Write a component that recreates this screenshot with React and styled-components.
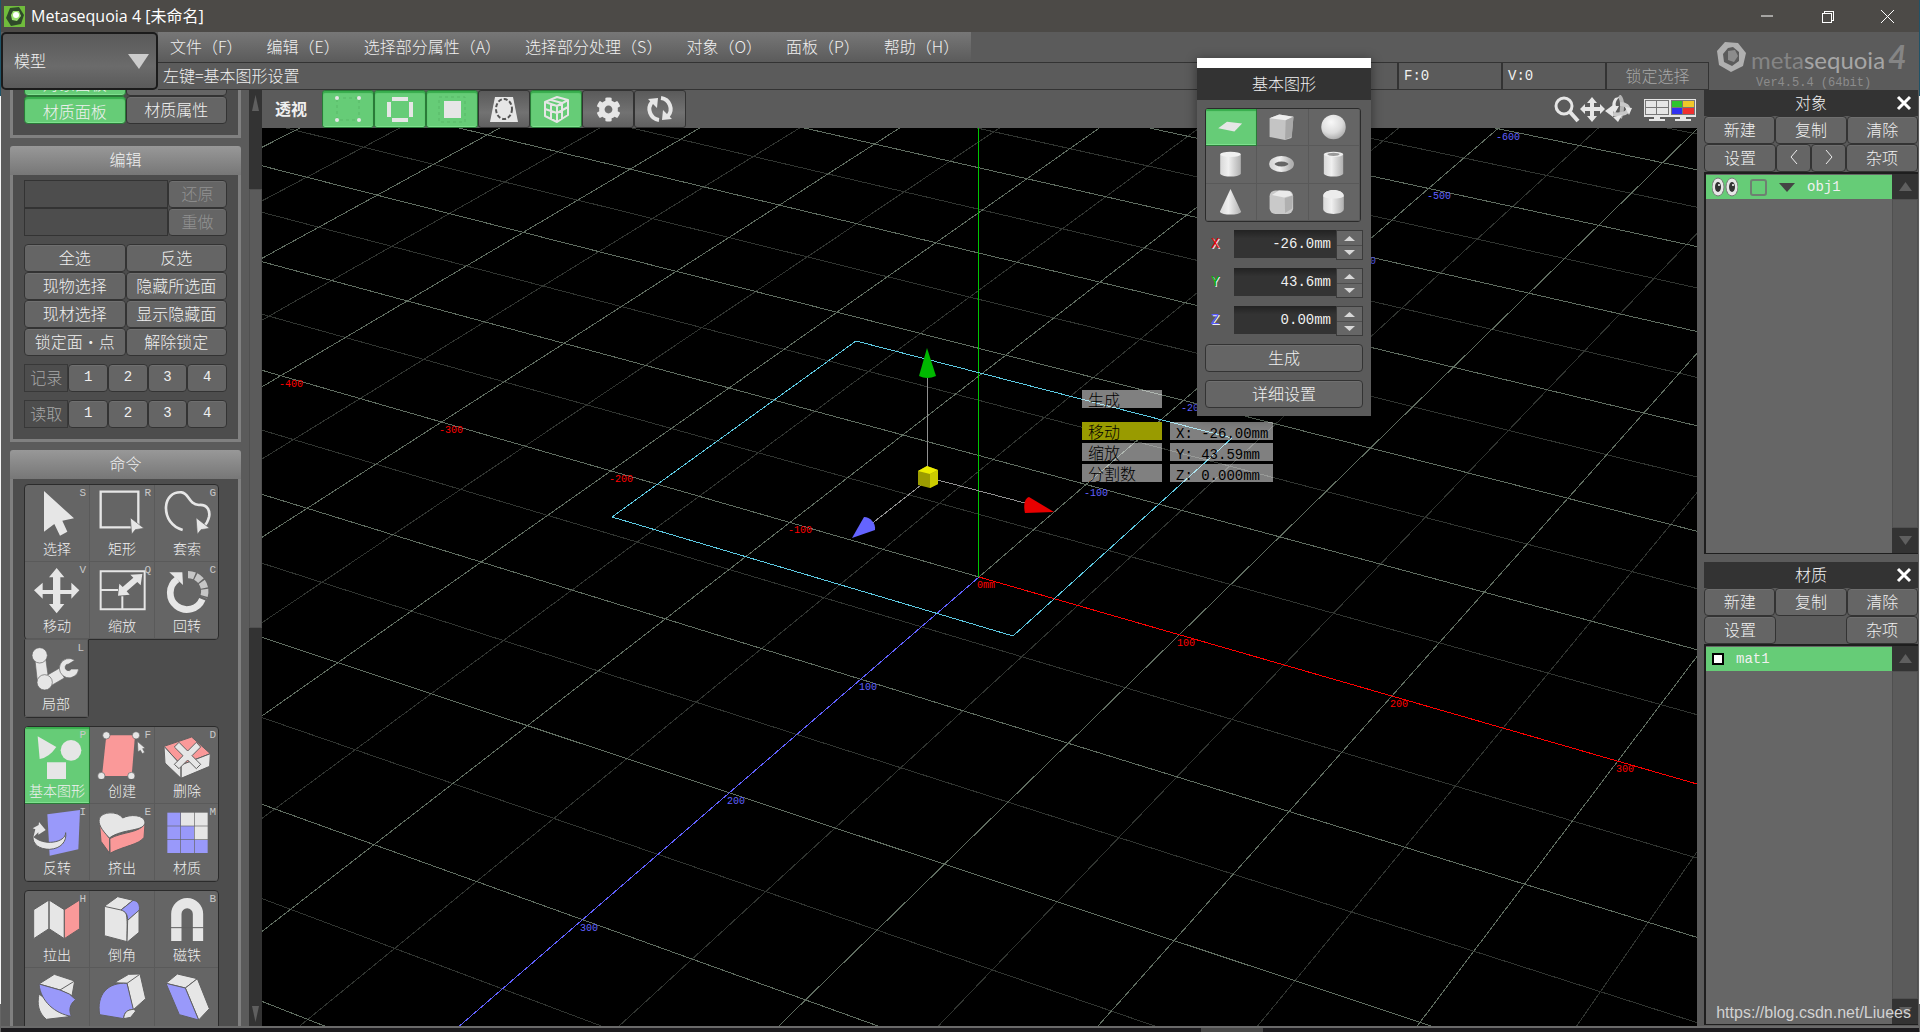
import { useState } from "react";
import styled, { createGlobalStyle, css } from "styled-components";
import { FaCog } from "react-icons/fa";

const cjk = `"Noto Sans CJK SC", sans-serif`;
const mono = `"Liberation Mono", "Noto Sans CJK SC", monospace`;

const GlobalStyle = createGlobalStyle`
  *, *::before, *::after { box-sizing: border-box; }
  body { margin: 0; background: #5b5b5b; }
  button, input, select { font: inherit; color: inherit; margin: 0; padding: 0; border: 0; background: none; border-radius: 0; }
  svg { display: block; }
`;

const Page = styled.div`
  position: relative;
  display: flex;
  flex-direction: column;
  height: 100vh;
  overflow: hidden;
  padding: 0 1px;
  font: 300 16px/24px ${cjk};
  color: #f0f0f0;
  background: linear-gradient(#1f5468 96px, #f4f4f4 96px, #f4f4f4 1004px, #666 1004px);
`;

/* title bar */

const TitleBar = styled.header`
  display: flex;
  flex: none;
  align-items: center;
  height: 32px;
  padding: 0 2px 0 3px;
  background: #4c4a47;
`;

const AppTitle = styled.h1`
  flex: 1;
  margin: 0 0 0 6px;
  font: 400 16px/24px "Open Sans", ${cjk};
  color: #fff;
`;

const WindowButton = styled.button`
  display: grid;
  place-items: center;
  width: 60px;
  height: 30px;
`;

/* header rows */

const Header = styled.div`
  display: grid;
  grid-template-columns: 157px 1fr 210px;
  flex: none;
  background: #5b5b5b;
`;

const ModeBox = styled.label`
  position: relative;
  display: flex;
  align-items: center;
  border: 2px solid #1b1b1b;
  border-radius: 5px;
  background: linear-gradient(#5a5a5a, #6b6b6b 60%, #5a5a5a);
`;

const ModeSelect = styled.select`
  appearance: none;
  width: 100%;
  height: 100%;
  padding: 0 0 2px 11px;
`;

const ModeArrow = styled.svg`
  position: absolute;
  right: 7px;
  pointer-events: none;
`;

const Bars = styled.div`
  display: flex;
  flex-direction: column;
`;

const MenuBar = styled.nav`
  display: flex;
  align-self: flex-start;
  height: 30px;
  background: linear-gradient(#777, #5b5b5b);
`;

const MenuItem = styled.button`
  padding: 0 12px 2px;
  white-space: nowrap;
`;

const StatusBar = styled.div`
  display: flex;
  height: 28px;
  border: solid #333;
  border-width: 1px 0;
  line-height: 24px;
`;

const StatusText = styled.div`
  flex: 1;
  padding-left: 5px;
`;

const StatusCell = styled.div`
  width: 104px;
  padding-left: 5px;
  border-left: 2px solid #333;
  font: 14px/26px ${mono};
`;

const LockButton = styled.button`
  width: 104px;
  padding-bottom: 2px;
  border: solid #333;
  border-width: 0 1px 0 2px;
  color: #a8a8a8;
`;

const Brand = styled.div`
  display: grid;
  grid-template-columns: 32px 1fr;
  column-gap: 3px;
  align-content: end;
  padding-left: 7px;
  color: #a6a6a6;
`;

const BrandName = styled.div`
  font: 400 24px/32px "Liberation Sans Narrow", Lato, sans-serif;
  white-space: nowrap;

  span { color: #858585; }
  em { margin-left: 3px; color: #858585; font-size: 32px; font-weight: 700; }
`;

const Version = styled.div`
  grid-column: 1 / -1;
  padding-left: 40px;
  font: 12px/14px ${mono};
  color: #8c8c8c;
`;

/* shared parts */

const Workspace = styled.main`
  display: flex;
  flex: 1;
  min-height: 0;
  background: #5b5b5b;
`;

const pressed = css`
  background: #66cc77;
  border-color: #2a7a38;
  box-shadow: inset 0 2px 1px #37ac4c, inset 0 -1px 0 #7ee08e;
`;

const Button = styled.button`
  flex: ${(p) => p.$grow ?? 1} 1 0;
  min-width: 0;
  height: 28px;
  padding: ${(p) => (p.$active ? "2px 0 0" : "0 0 2px")};
  border: 1px solid #333;
  border-radius: 4px;
  background: #656565;
  box-shadow: inset 0 1px 0 #6f6f6f;
  line-height: 22px;
  white-space: nowrap;
  ${(p) => p.$mono && `font-family: ${mono}; font-size: 14px;`}
  ${(p) => p.$active && pressed}

  &:disabled { color: #929292; }
`;

const Row = styled.div`
  display: flex;
`;

/* left panel */

const Sidebar = styled.aside`
  flex: none;
  width: 248px;
  padding: 0 8px 0 9px;
  overflow: hidden;
`;

const Group = styled.section`
  margin-bottom: 8px;
`;

const FirstGroup = styled(Group)`
  margin-top: -27px;
`;

const GroupTitle = styled.h2`
  height: 29px;
  margin: 0;
  border-radius: 3px 3px 0 0;
  background: linear-gradient(#989898, #777);
  font: inherit;
  line-height: 26px;
  text-align: center;
`;

const GroupBody = styled.div`
  display: flex;
  flex-direction: column;
  gap: 8px;
  padding: 5px 11px 11px;
  border: 3px solid #808080;
  border-top: 0;
  background: #4d4d4d;
`;

const History = styled.input`
  flex: 145 1 0;
  min-width: 0;
  height: 28px;
  border: 1px solid #333;
`;

const SlotLabel = styled.span`
  flex: 45 1 0;
  border: 1px solid #383838;
  color: #a8a8a8;
  text-align: center;
  line-height: 24px;
`;

const Tools = styled.div`
  display: grid;
  grid-template-columns: repeat(3, 1fr);
  width: 195px;
  border: 1px solid #2b2b2b;
  border-radius: 4px;
  background: #656565;
  overflow: hidden;
`;

const LooseTool = styled.div`
  width: 65px;
  margin-top: -9px;
  border: 1px solid #2b2b2b;
  border-top-color: #5b5b5b;
  border-radius: 0 0 4px 4px;
  background: #656565;
`;

const Tool = styled.button`
  position: relative;
  display: flex;
  flex-direction: column;
  align-items: center;
  width: 100%;
  height: 77px;
  border: solid #5a5a5a;
  border-width: 0 1px 1px 0;
  font-size: 14px;
  line-height: 22px;
  white-space: nowrap;
  ${(p) => p.$active && pressed}

  svg { flex: none; width: 64px; height: 52px; }
`;

const Key = styled.kbd`
  position: absolute;
  top: 1px;
  right: 3px;
  font: 11px/14px ${mono};
  color: #c8c8c8;
`;

const Scrollbar = styled.div`
  display: flex;
  flex: none;
  flex-direction: column;
  width: ${(p) => p.$width}px;
  background: #333;
`;

const ScrollButton = styled.button`
  display: grid;
  place-items: center;
  height: 25px;
`;

const Track = styled.div`
  display: flex;
  flex: 1;
  flex-direction: column;
`;

const Thumb = styled.div`
  flex: ${(p) => p.$size};
  background: #5b5b5b;
  border: 1px solid #505050;
`;

const Rest = styled.div`
  flex: ${(p) => p.$size};
`;

/* 3d view */

const View = styled.section`
  display: flex;
  flex: 1;
  flex-direction: column;
  min-width: 0;
`;

const ViewBar = styled.div`
  display: flex;
  flex: none;
  align-items: center;
  height: 38px;
`;

const ViewName = styled.div`
  width: 60px;
  padding: 0 0 2px 13px;
  font-weight: 700;
`;

const ViewButton = styled.button`
  width: 52px;
  height: 38px;
  border: 1px solid #333;
  border-radius: 3px;
  background: linear-gradient(#5a5a5a, #727272 60%, #606060);
  color: #e6e6e6;
  ${(p) => p.$active && pressed}

  svg { margin: auto; }
`;

const ViewTools = styled.div`
  display: flex;
  margin-left: auto;
  padding-right: 1px;
`;

const IconButton = styled.button`
  margin-left: ${(p) => p.$gap ?? 0}px;
`;

const Canvas = styled.svg`
  flex: 1;
  width: 100%;
  min-height: 0;
  background: #000;
`;

/* right panels */

const Panels = styled.aside`
  display: flex;
  flex: none;
  flex-direction: column;
  gap: 8px;
  width: 222px;
  padding: 0 1px 1px 7px;
`;

const Panel = styled.section`
  display: flex;
  flex: 1;
  flex-direction: column;
`;

const PanelTitle = styled.header`
  display: grid;
  grid-template-columns: 28px 1fr 28px;
  height: 26px;
  background: #333;
  text-align: center;

  h2 { margin: 0; font: inherit; }
`;

const Close = styled.button`
  display: grid;
  place-items: center;
`;

const Spacer = styled.div`
  flex: 1;
`;

const Half = styled.div`
  display: flex;
  flex: 1 1 0;
`;

const ListBox = styled.div`
  display: flex;
  flex: 1;
  border: solid #1e1e1e;
  border-width: 2px 0 1px 2px;
`;

const Items = styled.ul`
  flex: 1;
  margin: 0;
  padding: 1px 0 0;
  list-style: none;
  background: #666;
`;

const Item = styled.li`
  display: flex;
  align-items: center;
  height: 24px;
  background: #66cc77;
  font: 14px/24px ${mono};
  gap: 12px;
  padding-left: 6px;
`;

const Check = styled.input`
  appearance: none;
  width: 17px;
  height: 17px;
  border: 2px solid #6f7f72;
  border-radius: 3px;
`;

const Swatch = styled.span`
  width: 12px;
  height: 12px;
  border: 2px solid #000;
  background: #fff;
`;

const ChevronButton = styled(Button)`
  display: grid;
  place-items: center;
`;

/* floating primitive window */

const Window = styled.section`
  position: absolute;
  top: 58px;
  right: 549px;
  width: 174px;
  border-top: 10px solid #fff;
  background: #5b5b5b;
  box-shadow: 0 2px 11px rgba(0, 0, 0, 0.45);
`;

const WindowTitle = styled.h2`
  height: 32px;
  margin: 0;
  background: #333;
  font: inherit;
  line-height: 30px;
  text-align: center;
`;

const WindowBody = styled.div`
  display: flex;
  flex-direction: column;
  gap: 8px;
  padding: 8px;
`;

const Shapes = styled.div`
  display: grid;
  grid-template-columns: repeat(3, 1fr);
  grid-template-rows: repeat(3, 1fr);
  width: 156px;
  height: 114px;
  border: 1px solid #2b2b2b;
  border-radius: 3px;
  background: #656565;
  overflow: hidden;
`;

const Shape = styled.button`
  border: solid #595959;
  border-width: 0 1px 1px 0;
  ${(p) => p.$active && pressed}

  svg { width: 100%; height: 36px; }
`;

const Axis = styled.div`
  display: grid;
  grid-template-columns: 29px 102px 27px;
  height: 30px;
  font: 14px/28px ${mono};

  label { padding-left: 6px; color: ${(p) => p.$color}; text-shadow: 1px 1px 0 #eee; }
  input { width: 100%; height: 28px; padding-right: 5px; background: linear-gradient(#222, #333 30%); text-align: right; }
`;

const Spinner = styled.div`
  display: grid;
  grid-template-rows: 1fr 1fr;
  border: 1px solid #3b3b3b;
  background: #666;

  button { display: grid; place-items: center; }
  button + button { border-top: 1px solid #4d4d4d; }
`;

const Taskbar = styled.footer`
  flex: none;
  height: 6px;
  border-top: 2px solid #6a6a6a;
  background: linear-gradient(90deg, #1c1b1e 1200px, #484848 1200px, #484848 1262px, #1c1b1e 1262px);
`;

const Watermark = styled.a`
  position: absolute;
  right: 9px;
  bottom: 7px;
  font: 16px/24px "Liberation Sans", sans-serif;
  color: #d2d2d2;
  text-decoration: none;
`;

const L = "#e6e6e6";
const B = "#9999fa";
const P = "#fa9999";
const G = "#606060";

const pointer = (x, y) => <path d={`M${x} ${y}l4 50 11-14 26-4z`} fill={L} stroke={G} strokeWidth="2" />;

// drawn on a 192 x 156 cell, three units to a pixel
const toolIcons = {
  select: <path d="M57 18l90 82-35 7 15 33-22 12-17-35-31 23z" fill={L} />,
  rect: (
    <>
      <path d="M32 20h113v107h-113z" fill="none" stroke={L} strokeWidth="7" />
      {pointer(121, 98)}
    </>
  ),
  lasso: (
    <>
      <path d="M83 135C50 125 32 98 33 66c1-28 20-46 47-44 22 2 20 36 52 38 26-2 34 18 30 36-3 12-7 20-14 26" fill="none" stroke={L} strokeWidth="8" />
      {pointer(123, 98)}
    </>
  ),
  move: <path d="M95 18l23 28h-12v38h33V62l24 23-24 25V96h-33v30h12l-23 28-23-28h12V96H53v14L27 85l26-23v22h31V46H72z" fill={L} />,
  scale: (
    <>
      <path d="M32 28h132v114H32zM32 84h52M97 103v38" fill="none" stroke={L} strokeWidth="6" />
      <path d="M157 36l-5 34-10-10-32 28 9 10-35 3 4-36 10 10 32-28-9-9z" fill={L} />
    </>
  ),
  rotate: (
    <>
      <path d="M142 112A50 50 0 1 1 67 52" fill="none" stroke={L} strokeWidth="20" />
      <path d="M43 31l39 0 2 38z" fill={L} />
      <path d="M99 38a50 50 0 0 1 47 68" fill="none" stroke="#c6c6c6" strokeWidth="22" strokeDasharray="20 4" />
    </>
  ),
  local: (
    <g stroke={G} strokeWidth="2" fill={L}>
      <path d="M33 60l32-6 8 58-33 12z" />
      <path d="M62 110l45-26 14 30-45 26z" />
      <circle cx="47" cy="46" r="23" />
      <circle cx="62" cy="127" r="23" />
      <path d="M152 61a29 29 0 1 0 12 26h-22a10 10 0 1 1-8-15z" />
    </g>
  ),
  primitive: (
    <g fill={L}>
      <path d="M38 28l56 32q-22 32-50 36z" />
      <circle cx="138" cy="70" r="31" />
      <path d="M66 106h57v56H66z" />
    </g>
  ),
  create: (
    <>
      <path d="M49 25h86l-10 122H36z" fill={P} />
      <g fill={L} stroke={G} strokeWidth="2">
        <circle cx="49" cy="25" r="11" />
        <circle cx="138" cy="25" r="11" />
        <circle cx="124" cy="147" r="11" />
        <circle cx="34" cy="147" r="11" />
        <path d="M142 43l2 32 7-5 6 10 7-4-6-11 8-1z" />
      </g>
    </>
  ),
  remove: (
    <g stroke={G} strokeWidth="3">
      <path d="M27 58l83-28 56 50-88 34z" fill={P} />
      <path d="M27 58l51 56v40l-48-46zM78 114l88-34-2 38-86 36z" fill={L} />
      <path d="M58 60l14-14 26 26 26-26 13 14-26 26 26 26-13 13-26-26-26 26-14-13 26-26z" fill={L} />
    </g>
  ),
  flip: (
    <>
      <path d="M67 31l98-13-5 118-86 19z" fill={B} />
      <path d="M122 86c0 30-66 42-98 10-2 26 20 40 50 40 34-2 52-24 48-50z" fill={L} stroke={G} strokeWidth="3" />
      <path d="M25 100l6-24-8-3 18-10 1-9 20 24-22 14 0-7z" fill={L} />
    </>
  ),
  extrude: (
    <g stroke={G} strokeWidth="3">
      <path d="M29 62l30 42v44L33 112zM59 104c40-22 90-16 106-46l-3 42c-14 22-62 26-102 48z" fill={P} />
      <path d="M58 102C34 76 24 60 28 44c6-22 56-24 70-2 22-12 64-10 67 12 0 30-66 18-107 48z" fill={L} />
    </g>
  ),
  material: (
    <g>
      {[0, 1, 2].map((r) =>
        [0, 1, 2].map((c) => <rect key={`${r}${c}`} x={37 + c * 41} y={26 + r * 41} width="39" height="39" fill={c > r ? L : B} />)
      )}
    </g>
  ),
  pull: (
    <g stroke={G} strokeWidth="3">
      <path d="M26 56l46-29v86l-46 30zM72 27l46 29v87l-46-30z" fill={L} />
      <path d="M118 56l46-29v86l-46 30z" fill={P} />
    </g>
  ),
  bevel: (
    <g stroke={G} strokeWidth="3">
      <path d="M43 46l40-29 46 11-34 28c20 6 16 26 16 96l-68-18z" fill={L} />
      <path d="M43 46l50 11 36-28" fill="none" />
      <path d="M93 57l36-29c20 2 20 20 19 30l-35 30c0-18-6-26-20-31z" fill={B} />
      <path d="M113 88l34-30v66l-36 30z" fill={L} />
    </g>
  ),
  magnet: (
    <>
      <path d="M64 150V69a32 32 0 0 1 65 0v81" fill="none" stroke={L} strokeWidth="31" />
      <path d="M46 110h100" stroke={G} strokeWidth="3" />
    </>
  ),
  twist: (
    <g stroke={G} strokeWidth="3" strokeLinejoin="round">
      <path d="M42 48l46-29 61 20-8 44-36-17z" fill={L} />
      <path d="M105 66l44-27" fill="none" />
      <path d="M42 78c-6 30-2 56 22 76l68-8z" fill={L} />
      <path d="M42 48l63 18 28 12 19 17c-20 14-20 34-13 50-48-8-92-44-97-97z" fill={B} />
    </g>
  ),
  bend: (
    <g stroke={G} strokeWidth="3" strokeLinejoin="round">
      <path d="M73 44l43-25 34-1 17 74-38 34-18-80z" fill={L} />
      <path d="M111 46l37-26" fill="none" />
      <path d="M29 140c-10-60 24-98 82-94l19 78c-18 2-28 10-29 28z" fill={B} />
      <path d="M101 152c2-20 10-26 29-28l8 4-16 20z" fill={L} />
    </g>
  ),
  shear: (
    <g stroke={G} strokeWidth="3" strokeLinejoin="round">
      <path d="M33 46l34-28 60 14-36 28z" fill={L} />
      <path d="M91 60l36-28 36 90-32 34z" fill={L} />
      <path d="M33 46l58 14 40 96-58-16z" fill={B} />
    </g>
  ),
};

const commandGroups = [
  [
    ["select", "选择", "S"], ["rect", "矩形", "R"], ["lasso", "套索", "G"],
    ["move", "移动", "V"], ["scale", "缩放", "Q"], ["rotate", "回转", "C"],
  ],
  [
    ["primitive", "基本图形", "P"], ["create", "创建", "F"], ["remove", "删除", "D"],
    ["flip", "反转", "I"], ["extrude", "挤出", "E"], ["material", "材质", "M"],
  ],
  [
    ["pull", "拉出", "H"], ["bevel", "倒角", ""], ["magnet", "磁铁", "B"],
    ["twist", "", ""], ["bend", "", ""], ["shear", "", ""],
  ],
];

function ToolButton({ name, label, hotkey, active, onClick }) {
  return (
    <Tool $active={active} onClick={onClick} aria-label={label || name}>
      <svg viewBox="0 0 192 156">{toolIcons[name]}</svg>
      {label}
      {hotkey && <Key>{hotkey}</Key>}
    </Tool>
  );
}

function Arrow({ up, width = 11, height = 9, color = "#5f5f5f" }) {
  return (
    <svg width={width} height={height} viewBox="0 0 10 10" preserveAspectRatio="none">
      <path d={up ? "M0 10L5 0l5 10z" : "M0 0h10L5 10z"} fill={color} />
    </svg>
  );
}

function LeftPanel() {
  const [tool, setTool] = useState("primitive");
  return (
    <>
      <Sidebar>
        <FirstGroup>
          <GroupBody>
            <div>
              <Row><Button $active>对象面板</Button><Button aria-label="对象属性" /></Row>
              <Row><Button $active>材质面板</Button><Button>材质属性</Button></Row>
            </div>
          </GroupBody>
        </FirstGroup>
        <Group>
          <GroupTitle>编辑</GroupTitle>
          <GroupBody>
            <div>
              <Row><History readOnly aria-label="还原" /><Button $grow={58} disabled>还原</Button></Row>
              <Row><History readOnly aria-label="重做" /><Button $grow={58} disabled>重做</Button></Row>
            </div>
            <div>
              <Row><Button>全选</Button><Button>反选</Button></Row>
              <Row><Button>现物选择</Button><Button>隐藏所选面</Button></Row>
              <Row><Button>现材选择</Button><Button>显示隐藏面</Button></Row>
              <Row><Button>锁定面·点</Button><Button>解除锁定</Button></Row>
            </div>
            {["记录", "读取"].map((name) => (
              <Row key={name}>
                <SlotLabel>{name}</SlotLabel>
                {[1, 2, 3, 4].map((n) => <Button key={n} $mono $grow={40}>{n}</Button>)}
              </Row>
            ))}
          </GroupBody>
        </Group>
        <Group>
          <GroupTitle>命令</GroupTitle>
          <GroupBody>
            {commandGroups.map((group, i) => [
              <Tools key={i}>
                {group.map(([name, label, hotkey]) => (
                  <ToolButton key={name} name={name} label={label} hotkey={hotkey} active={tool === name} onClick={() => setTool(name)} />
                ))}
              </Tools>,
              i === 0 && (
                <LooseTool key="local">
                  <ToolButton name="local" label="局部" hotkey="L" active={tool === "local"} onClick={() => setTool("local")} />
                </LooseTool>
              ),
            ])}
          </GroupBody>
        </Group>
      </Sidebar>
      <Scrollbar $width={13}>
        <ScrollButton aria-label="up"><Arrow up width={7} height={16} /></ScrollButton>
        <Track>
          <Rest $size={74} />
          <Thumb $size={438} />
          <Rest $size={374} />
        </Track>
        <ScrollButton aria-label="down"><Arrow width={7} height={16} /></ScrollButton>
      </Scrollbar>
    </>
  );
}

// floor plane (x, z) in millimetres to view coordinates
function project(x, z) {
  const w = 1 - 0.0002868 * x - 0.0004993 * z;
  return [(1.66505 * x - 1.61252 * z + 979) / w, (0.3955 * x + 0.683 * z + 577) / w];
}

function FloorLine({ from, to, color }) {
  const [x1, y1] = project(...from);
  const [x2, y2] = project(...to);
  return <line x1={x1} y1={y1} x2={x2} y2={y2} stroke={color} />;
}

const gridSteps = Array.from({ length: 51 }, (_, i) => -1500 + i * 50);
const gridLines = [
  ...gridSteps.filter((s) => s % 100 !== 0).map((s) => [s, "#303430"]),
  ...gridSteps.filter((s) => s % 100 === 0).map((s) => [s, "#5f6d60"]),
];

function AxisLabel({ x = 0, z = 0, color, children }) {
  const [px, py] = project(x, z);
  return <text x={Math.round(px) - 2} y={Math.round(py) + 11} fill={color}>{children}</text>;
}

function Tag({ x, y, width = 80, fill = "rgba(255,255,255,.5)", children }) {
  return (
    <svg x={x} y={y} width={width} height="18">
      <rect width={width} height="18" fill={fill} />
      <text x="6" y="16" fill="#000" xmlSpace="preserve">{children}</text>
    </svg>
  );
}

function Scene() {
  return (
    <Canvas viewBox="262 128 1435 898" preserveAspectRatio="xMidYMid slice">
      <g shapeRendering="crispEdges">
        {gridLines.map(([s, color]) => (
          <g key={s}>
            <FloorLine from={[s, -1500]} to={[s, 1000]} color={color} />
            <FloorLine from={[-1500, s]} to={[1000, s]} color={color} />
          </g>
        ))}
        <FloorLine from={[0, 0]} to={[1000, 0]} color="#f00" />
        <FloorLine from={[0, 0]} to={[0, 1000]} color="#6060ff" />
        <line x1="978" y1="577" x2="978" y2="128" stroke="#00c400" />
        <path d="M856 341L1232 438 1013 636 612 517z" fill="none" stroke="#5cc8e0" />
        <path d="M927 377V470M930 478L1025 503M925 482L870 525" stroke="#909090" fill="none" />
      </g>
      <path d="M927 348l-8 28q8 4 17 0z" fill="#00b800" />
      <path d="M918 471l9-5 11 4v14l-8 4-12-3z" fill="#9c9c00" />
      <path d="M918 471l9-5 11 4-8 4z" fill="#ecec00" />
      <path d="M930 474l8-4v14l-8 4z" fill="#cccc00" />
      <path d="M852 538l12-21c6 0 12 6 11 13z" fill="#6464ff" />
      <path d="M1054 512l-25-15c-6 2-5 12-4 16z" fill="#e80000" />
      <g fontFamily="Liberation Mono, monospace" fontSize="10">
        {[-400, -300, -200, -100, 100, 200, 300].map((x) => <AxisLabel key={x} x={x} color="#f00">{x}</AxisLabel>)}
        {[-600, -500, -400, -300, -200, -100, 100, 200, 300].map((z) => <AxisLabel key={z} z={z} color="#6060ff">{z}</AxisLabel>)}
        <AxisLabel color="#f00">0mm</AxisLabel>
      </g>
      <g fontFamily="Noto Sans CJK SC, sans-serif" fontSize="16">
        <Tag x={1082} y={390}>生成</Tag>
        <Tag x={1082} y={422} fill="#999b00">移动</Tag>
        <Tag x={1082} y={443}>缩放</Tag>
        <Tag x={1082} y={464}>分割数</Tag>
      </g>
      <g fontFamily="Liberation Mono, monospace" fontSize="14">
        <Tag x={1170} y={422} width={103}>X: -26.00mm</Tag>
        <Tag x={1170} y={443} width={103}>Y: 43.59mm</Tag>
        <Tag x={1170} y={464} width={103}>Z: 0.000mm</Tag>
      </g>
    </Canvas>
  );
}

const viewIcons = [
  ["vertices", true,
    <g fill={L}>
      <path d="M8 4h22v22H8z" fill="none" stroke="#58b868" strokeDasharray="3 3" />
      <circle cx="8" cy="4" r="2" /><circle cx="30" cy="4" r="2" /><circle cx="8" cy="26" r="2" /><circle cx="30" cy="26" r="2" />
    </g>],
  ["edges", true, <path d="M11 3h16v4H11zM11 24h16v4H11zM6 8h4v15H6zM28 8h4v15h-4z" fill={L} />],
  ["faces", true,
    <>
      <path d="M6 3h26v25H6z" fill="none" stroke="#58b868" strokeDasharray="3 3" />
      <path d="M11 7h17v17H11z" fill={L} />
    </>],
  ["projection", false,
    <>
      <path d="M10 3h18l5 25H5z" fill={L} />
      <ellipse cx="19" cy="15" rx="8" ry="10" fill="none" stroke="#555" strokeWidth="2" strokeDasharray="4 2" />
    </>],
  ["wireframe", true,
    <g fill="none" stroke={L} strokeWidth="2" strokeLinejoin="round">
      <path d="M8 8l12-5 11 3v15l-11 7-12-6zM8 8l12 4 11-6M20 12v16M14 6l11 3v16M14 10v15M8 15l12 4 11-6" />
    </g>],
  ["settings", false, null],
  ["reset", false,
    <>
      <path d="M18 26A11 11 0 0 1 11 8M20 4a11 11 0 0 1 7 18" fill="none" stroke={L} strokeWidth="4" />
      <path d="M7 5l10-1-1 10zM31 25l-10 1 1-10z" fill={L} />
    </>],
];

function MainView() {
  return (
    <View>
      <ViewBar>
        <ViewName>透视</ViewName>
        {viewIcons.map(([name, active, icon]) => (
          <ViewButton key={name} $active={active} aria-label={name}>
            {icon ? <svg width="38" height="30">{icon}</svg> : <FaCog size={25} />}
          </ViewButton>
        ))}
        <ViewTools>
          <IconButton aria-label="zoom">
            <svg width="26" height="28" fill="none" stroke={L}>
              <circle cx="10" cy="11" r="8" strokeWidth="3" />
              <path d="M16 17l8 9" strokeWidth="4" />
            </svg>
          </IconButton>
          <IconButton aria-label="pan">
            <svg width="25" height="28" viewBox="0 0 25 28">
              <path d="M12 2l5 6h-3v4h6V9l5 5-5 5v-3h-6v5h3l-5 6-5-6h3v-5H5v3l-5-5 5-5v3h5V8H7z" fill={L} />
            </svg>
          </IconButton>
          <IconButton aria-label="orbit">
            <svg width="27" height="28" viewBox="0 0 27 28">
              <path d="M14 1c4 3 4 14 1 22" fill="none" stroke="#b4b4b4" strokeWidth="4" />
              <path d="M15 9c6 0 9 3 8 6-1 4-9 5-15 4" fill="none" stroke="#c8c8c8" strokeWidth="4" />
              <path d="M10 3c-3 4-3 7-2 9l-3 0 5 6 4-7-3 0c-1-3 0-5 3-9z" fill={L} />
              <path d="M0 16l8-6v3l4 1-4 3 0 5z" fill={L} />
              <path d="M20 12l7 1-3 7zM8 22l9-2-4 7z" fill={L} />
            </svg>
          </IconButton>
          {[["layout", [L, L, L, L]], ["colors", ["#2cc42c", "#f0c828", "#3030f0", "#f03030"]]].map(([name, c], i) => (
            <IconButton key={name} $gap={i ? 0 : 12} aria-label={name}>
              <svg width="26" height="28" viewBox="0 0 26 28">
                <path d="M0 4h26v18H0zM10 21h6v3h5v2H5v-2h5z" fill={L} />
                <path d="M1 5h24v15H1z" fill="#777" />
                <path d="M2 6h10v6H2z" fill={c[0]} /><path d="M13 6h11v6H13z" fill={c[1]} />
                <path d="M2 13h10v6H2z" fill={c[2]} /><path d="M13 13h11v6H13z" fill={c[3]} />
              </svg>
            </IconButton>
          ))}
        </ViewTools>
      </ViewBar>
      <Scene />
    </View>
  );
}

function SidePanel({ title, middle, children }) {
  return (
    <Panel>
      <PanelTitle>
        <span />
        <h2>{title}</h2>
        <Close aria-label="close">
          <svg width="16" height="16"><path d="M2 2l12 12M14 2L2 14" stroke="#fff" strokeWidth="3" /></svg>
        </Close>
      </PanelTitle>
      <Row><Button>新建</Button><Button>复制</Button><Button>清除</Button></Row>
      <Row><Button>设置</Button>{middle}<Button>杂项</Button></Row>
      <ListBox>
        <Items>{children}</Items>
        <Scrollbar $width={26}>
          <ScrollButton aria-label="up"><Arrow up width={13} /></ScrollButton>
          <Track><Thumb $size={1} /></Track>
          <ScrollButton aria-label="down"><Arrow width={13} /></ScrollButton>
        </Scrollbar>
      </ListBox>
    </Panel>
  );
}

function RightPanels() {
  return (
    <Panels>
      <SidePanel
        title="对象"
        middle={
          <Half>
            {["M8 1L2 8l6 7", "M2 1l6 7-6 7"].map((d, i) => (
              <ChevronButton key={d} aria-label={i ? "next" : "previous"}>
                <svg width="10" height="16"><path d={d} fill="none" stroke="#eee" /></svg>
              </ChevronButton>
            ))}
          </Half>
        }
      >
        <Item>
          <svg width="26" height="20">
            <ellipse cx="6" cy="10" rx="6" ry="9" fill="#e6e6e6" stroke="#777" />
            <ellipse cx="20" cy="10" rx="6" ry="9" fill="#e6e6e6" stroke="#777" />
            <ellipse cx="6" cy="10" rx="3" ry="5" fill="#333" />
            <ellipse cx="20" cy="10" rx="3" ry="5" fill="#333" />
            <circle cx="7" cy="8" r="1" fill="#fff" /><circle cx="21" cy="8" r="1" fill="#fff" />
          </svg>
          <Check type="checkbox" aria-label="obj1" />
          <Arrow width={16} color="#444" />
          obj1
        </Item>
      </SidePanel>
      <SidePanel title="材质" middle={<Spacer />}>
        <Item><Swatch />mat1</Item>
      </SidePanel>
    </Panels>
  );
}

// 156 x 108 cells, three units to a pixel
const shapeIcons = {
  plane: <path d="M38 58l27-20 47 5-24 25z" fill={L} />,
  cube: <><path d="M39 27l30-12 44 7-6 66-20 6-48-9z" fill="#c4c4c4" /><path d="M39 27l30-12 44 7-24 11z" fill="#eee" /><path d="M89 33l24-11-5 62-21 9z" fill="#a8a8a8" /></>,
  sphere: <circle cx="76" cy="54" r="38" fill="url(#ball)" />,
  cylinder: <><path d="M44 24v60c8 12 56 12 64 0V24z" fill="url(#side)" /><ellipse cx="76" cy="24" rx="32" ry="8" fill="#f0f0f0" /></>,
  torus: <ellipse cx="76" cy="54" rx="30" ry="16" fill="none" stroke="url(#side)" strokeWidth="17" />,
  tube: <><path d="M46 24v60c8 12 52 12 60 0V24z" fill="url(#side)" /><ellipse cx="76" cy="24" rx="30" ry="8" fill="#eee" /><ellipse cx="76" cy="24" rx="19" ry="5" fill="#999" /></>,
  cone: <path d="M76 14l33 70c-6 12-60 12-66 0z" fill="url(#side)" />,
  roundCube: <><rect x="39" y="18" width="73" height="73" rx="18" fill="#c9c9c9" /><path d="M46 32l22-14 34 3 8 12-26 7z" fill="#eaeaea" /><path d="M86 42l25-8-2 40-22 14z" fill="#b0b0b0" /></>,
  capsule: <><path d="M44 36c0-26 64-26 64 0v40c0 20-64 20-64 0z" fill="url(#side)" /><path d="M44 36c0-26 64-26 64 0-8 10-56 10-64 0z" fill="#ececec" /></>,
};

const Shading = () => (
  <defs>
    <linearGradient id="side"><stop offset="0" stopColor="#d8d8d8" /><stop offset=".4" stopColor="#f0f0f0" /><stop offset="1" stopColor="#b0b0b0" /></linearGradient>
    <radialGradient id="ball" cx=".4" cy=".3" r=".75"><stop offset="0" stopColor="#f8f8f8" /><stop offset=".6" stopColor="#dcdcdc" /><stop offset="1" stopColor="#a8a8a8" /></radialGradient>
  </defs>
);

function PrimitiveWindow() {
  const [shape, setShape] = useState("plane");
  return (
    <Window>
      <WindowTitle>基本图形</WindowTitle>
      <WindowBody>
        <Shapes>
          {Object.entries(shapeIcons).map(([name, icon], i) => (
            <Shape key={name} $active={shape === name} onClick={() => setShape(name)} aria-label={name}>
              <svg viewBox="0 0 156 108">{i === 0 && <Shading />}{icon}</svg>
            </Shape>
          ))}
        </Shapes>
        {[["X", "-26.0mm", "#f00000"], ["Y", "43.6mm", "#00b400"], ["Z", "0.00mm", "#5a5aff"]].map(([axis, value, color]) => (
          <Axis key={axis} $color={color}>
            <label htmlFor={`pos-${axis}`}>{axis}</label>
            <input id={`pos-${axis}`} defaultValue={value} />
            <Spinner>
              <button aria-label={`${axis} +`}><Arrow up height={5} color="#d8d8d8" /></button>
              <button aria-label={`${axis} -`}><Arrow height={5} color="#d8d8d8" /></button>
            </Spinner>
          </Axis>
        ))}
        <Row><Button>生成</Button></Row>
        <Row><Button>详细设置</Button></Row>
      </WindowBody>
    </Window>
  );
}

const menus = ["文件（F）", "编辑（E）", "选择部分属性（A）", "选择部分处理（S）", "对象（O）", "面板（P）", "帮助（H）"];

export default function App() {
  return (
    <Page>
      <GlobalStyle />
      <TitleBar>
        <svg width="21" height="21" viewBox="0 0 21 21">
          <path d="M0 0h21v21H0z" fill="#70bc3c" />
          <path d="M6 2l9-1 5 8-3 9-10 2-5-8z" fill="#2f4a2a" />
          <path d="M9 5l6 0 2 5-4 5-5-1-1-5z" fill="#9be070" />
          <circle cx="12" cy="9" r="3" fill="#fff" />
        </svg>
        <AppTitle>Metasequoia 4 [未命名]</AppTitle>
        <WindowButton aria-label="minimize"><svg width="12" height="12"><path d="M0 6h12" stroke="#fff" /></svg></WindowButton>
        <WindowButton aria-label="restore">
          <svg width="13" height="13" fill="none" stroke="#fff" shapeRendering="crispEdges"><path d="M1 3h9v9H1zM3 3V1h9v9h-2" /></svg>
        </WindowButton>
        <WindowButton aria-label="close"><svg width="13" height="13"><path d="M0 0l13 13M13 0L0 13" stroke="#fff" /></svg></WindowButton>
      </TitleBar>
      <Header>
        <ModeBox>
          <ModeSelect aria-label="mode"><option>模型</option></ModeSelect>
          <ModeArrow width="21" height="15"><path d="M0 0h21L11 15z" fill="#ccc" /></ModeArrow>
        </ModeBox>
        <Bars>
          <MenuBar>{menus.map((m) => <MenuItem key={m}>{m}</MenuItem>)}</MenuBar>
          <StatusBar>
            <StatusText>左键=基本图形设置</StatusText>
            <StatusCell>F:0</StatusCell>
            <StatusCell>V:0</StatusCell>
            <LockButton>锁定选择</LockButton>
          </StatusBar>
        </Bars>
        <Brand>
          <svg width="32" height="32" viewBox="0 0 32 32">
            <path d="M9 1l13 1 8 10-3 13-12 6L3 24 1 10zM12 7L7 13l1 8 8 4 7-5 0-9-6-5z" fill="#b0b0b0" fillRule="evenodd" />
            <path d="M12 10l7-1 3 6-4 6-6-2z" fill="#8c8c8c" />
          </svg>
          <BrandName><span>meta</span>sequoia<em>4</em></BrandName>
          <Version>Ver4.5.4 (64bit)</Version>
        </Brand>
      </Header>
      <Workspace>
        <LeftPanel />
        <MainView />
        <RightPanels />
      </Workspace>
      <Taskbar />
      <PrimitiveWindow />
      <Watermark href="https://blog.csdn.net/Liuees">https://blog.csdn.net/Liuees</Watermark>
    </Page>
  );
}
